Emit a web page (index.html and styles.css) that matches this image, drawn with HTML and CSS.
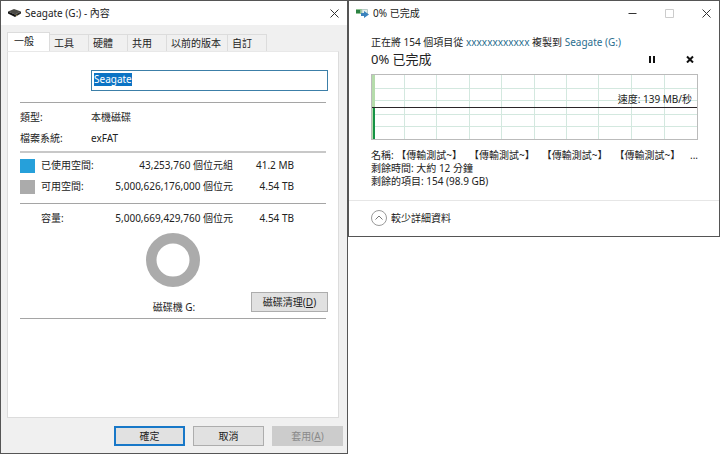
FILE: index.html
```html
<!DOCTYPE html>
<html lang="zh-TW">
<head>
<meta charset="utf-8">
<title>Seagate (G:) - 內容</title>
<link rel="stylesheet" href="styles.css">
</head>
<body>
<main class="desktop">
  <section class="window props">
    <header class="titlebar">
      <svg class="drive-icon" viewBox="0 0 13 10" aria-hidden="true"><path d="M0 3.500 6 1l7 2.500-6 3z" fill="#4b4a45"/><path d="M0 3.500l7 3V9L0 5.500z" fill="#111"/><path d="M7 6.500l6-3v2L7 9z" fill="#2a2926"/><path d="M8 7.500l1-.5" stroke="#b3a24c"/></svg>
      <h1 class="title">Seagate (G:) - 內容</h1>
      <button class="caption" aria-label="關閉"><svg viewBox="0 0 9 9"><path d="M.5.5l8 8m0-8l-8 8"/></svg></button>
    </header>
    <div class="props-body">
      <nav class="tabs" role="tablist">
        <button class="tab selected" role="tab" aria-selected="true">一般</button>
        <button class="tab" role="tab">工具</button>
        <button class="tab" role="tab">硬體</button>
        <button class="tab" role="tab">共用</button>
        <button class="tab wide" role="tab">以前的版本</button>
        <button class="tab" role="tab">自訂</button>
      </nav>
      <div class="panel" role="tabpanel">
        <div class="name-field"><label class="name-box"><span class="highlight" aria-hidden="true">Seagate</span><input class="name-input" type="text" value="Seagate" aria-label="磁碟名稱"></label></div>
        <hr class="rule">
        <dl class="facts">
          <dt>類型:</dt><dd>本機磁碟</dd>
          <dt>檔案系統:</dt><dd>exFAT</dd>
        </dl>
        <hr class="rule thick">
        <table class="usage">
          <tr><td class="key"><span class="swatch used"></span></td><th scope="row">已使用空間:</th><td class="bytes">43,253,760 個位元組</td><td class="size">41.2 MB</td></tr>
          <tr><td class="key"><span class="swatch free"></span></td><th scope="row">可用空間:</th><td class="bytes">5,000,626,176,000 個位元</td><td class="size">4.54 TB</td></tr>
        </table>
        <hr class="rule spaced">
        <table class="usage">
          <tr><td class="key"></td><th scope="row">容量:</th><td class="bytes">5,000,669,429,760 個位元</td><td class="size">4.54 TB</td></tr>
        </table>
        <svg class="donut" viewBox="0 0 54 54" aria-hidden="true"><circle cx="27" cy="27" r="21.75" fill="none" stroke="#ababab" stroke-width="10.5"/></svg>
        <div class="drive-row">
          <span class="drive-label">磁碟機 G:</span>
          <button class="button cleanup">磁碟清理(<u>D</u>)</button>
        </div>
        <hr class="rule last">
      </div>
      <footer class="actions">
        <button class="button primary">確定</button>
        <button class="button">取消</button>
        <button class="button" disabled>套用(<u>A</u>)</button>
      </footer>
    </div>
  </section>

  <section class="window copy">
    <header class="titlebar">
      <svg class="copy-icon" viewBox="0 0 13 10" aria-hidden="true"><path d="M0 1h6v5H0z" fill="#8fc293"/><path d="M0 2h4v3H0z" fill="#2c8143"/><path d="M6 1.500h5.500v5H6z" fill="#e4efec" stroke="#b7cbc8"/><path d="M5 5h3V3l5 3.500L8 10V8H5z" fill="#3b83bd"/></svg>
      <h2 class="title">0% 已完成</h2>
      <button class="caption" aria-label="最小化"><svg viewBox="0 0 9 9"><path d="M.5 4.500h8"/></svg></button>
      <button class="caption" aria-label="最大化" disabled><svg viewBox="0 0 9 9"><path d="M.5.5h8v8h-8z"/></svg></button>
      <button class="caption" aria-label="關閉"><svg viewBox="0 0 9 9"><path d="M.5.5l8 8m0-8l-8 8"/></svg></button>
    </header>
    <div class="copy-body">
      <p class="route">正在將 154 個項目從 <a href="#source">xxxxxxxxxxxx</a> 複製到 <a href="#target">Seagate (G:)</a></p>
      <div class="progress-row">
        <h3 class="progress">0% 已完成</h3>
        <button class="control" aria-label="暫停"><svg viewBox="0 0 8 8"><path d="M2 1v7M6 1v7"/></svg></button>
        <button class="control" aria-label="取消"><svg viewBox="0 0 8 8"><path d="M1 1.500l6 6m0-6l-6 6"/></svg></button>
      </div>
      <div class="chart">
        <svg class="graph" viewBox="0 0 325 64" preserveAspectRatio="none" aria-hidden="true">
          <path d="M32.500 0v64M64.500 0v64M97.500 0v64M129.500 0v64M162.500 0v64M194.500 0v64M226.500 0v64M259.500 0v64M292.500 0v64M0 13.500h325M0 25.500h325M0 39.500h325M0 51.500h325" fill="none" stroke="#d3e8df"/>
          <path d="M0 0h3v64H0z" fill="#b5dcab"/>
          <path d="M1 33h2v31H1z" fill="#159245"/>
          <path d="M0 32.500h325" stroke="#2b2428"/>
        </svg>
        <span class="speed">速度: 139 MB/秒</span>
      </div>
      <div class="details">
        <p class="names"><span>名稱: 【傳輸測試~】</span><span>【傳輸測試~】</span><span>【傳輸測試~】</span><span>【傳輸測試~】</span><span class="more">...</span></p>
        <p>剩餘時間: 大約 12 分鐘</p>
        <p>剩餘的項目: 154 (98.9 GB)</p>
      </div>
    </div>
    <footer class="copy-footer">
      <button class="toggle"><svg viewBox="0 0 16 16"><circle cx="8" cy="8" r="7.500" stroke="#9a9a9a"/><path d="M4.500 9.500L8 6l3.500 3.500" stroke="#777"/></svg>較少詳細資料</button>
    </footer>
  </section>
</main>
</body>
</html>
```
FILE: styles.css
```css
* { box-sizing: border-box; }

body, h1, h2, h3, p, dl, dd { margin: 0; }

body {
  background: #fff;
  color: #222;
  font: 10px/14px "Noto Sans", "Noto Sans CJK TC", sans-serif;
}

h1, h2, h3, th { font-size: inherit; font-weight: 400; }

button, input { font: inherit; color: inherit; }

button { padding: 0; border: 0; background: none; }

.desktop {
  display: grid;
  grid-template-columns: 29fr 31fr;
  align-items: start;
  min-height: 100vh;
}

.window {
  display: flex;
  flex-direction: column;
  border: 1px solid #555;
  background: #fff;
}

.props { min-height: 100vh; background: #f0f0f0; }

.titlebar {
  display: flex;
  align-items: center;
  height: 24px;
  padding: 0 8px 0 7px;
  background: #fff;
}

.title { flex: 1; margin-left: 4px; }

.drive-icon, .copy-icon { width: 13px; height: 10px; }

.caption { display: flex; margin-left: 28px; }

.caption svg {
  width: 9px;
  height: 9px;
  fill: none;
  stroke: #333;
}

.caption:disabled svg { stroke: #ccc; }

.props-body {
  display: flex;
  flex: 1;
  flex-direction: column;
  padding: 7px 4px 7px 6px;
}

.tabs { display: flex; align-items: flex-end; height: 19px; }

.tab {
  width: 39px;
  height: 17px;
  padding-left: 4px;
  border: 1px solid #dcdcdc;
  border-width: 1px 1px 0 0;
  text-align: left;
}

.tab.wide { width: 61px; }

.tab.selected {
  width: 43px;
  height: 19px;
  padding: 0 0 2px 6px;
  border-left-width: 1px;
  background: #fff;
}

.panel {
  flex: 1;
  margin-right: 4px;
  padding: 18px 12px 0;
  border: 1px solid #dcdcdc;
  border-top-color: #e8e8e8;
  background: #fff;
}

.name-field { display: flex; padding-left: 71px; margin-right: -2px; }

.name-box {
  position: relative;
  flex: 1;
  height: 21px;
  border: 1px solid #3c7fa8;
}

.name-input {
  display: block;
  width: 100%;
  height: 18px;
  padding: 0 2px;
  border: 0;
  outline: 0;
  background: none;
  color: transparent;
}

.highlight {
  position: absolute;
  top: 2px;
  left: 2px;
  height: 13px;
  background: #0b73c4;
  color: #fff;
  line-height: 13px;
}

.rule {
  height: 1px;
  margin: 11px 0 4px;
  border: 0;
  background: #a5a5a5;
}

.rule.thick { height: 2px; margin: 2px 0; background: #c8c8c8; }

.rule.spaced { margin: 6px 0 4px; }

.rule.last { margin: 1px 0; }

.facts {
  display: grid;
  grid-template-columns: 71px 1fr;
  line-height: 21px;
}

.usage {
  width: 100%;
  padding-right: 32px;
  border-spacing: 0;
  table-layout: fixed;
  line-height: 21px;
}

.usage td, .usage th { height: 21px; padding: 0; white-space: nowrap; }

.usage th { width: 64px; text-align: left; }

.usage .key { width: 21px; }

.usage .bytes { text-align: right; }

.usage .size { width: 61px; text-align: right; }

.swatch { display: block; width: 15px; height: 14px; }

.used { background: #26a0da; }

.free { background: #ababab; }

.donut { display: block; width: 54px; height: 54px; margin: 4px auto 5px; }

.drive-row {
  display: grid;
  grid-template-columns: 1fr auto 1fr;
  margin-right: -2px;
}

.drive-label { grid-column: 2; padding-top: 8px; line-height: 14px; height: 25px; }

.button {
  width: 71px;
  height: 20px;
  border: 1px solid #adadad;
  background: #e1e1e1;
}

.button.primary { border: 2px solid #1878c8; }

.button:disabled { border-color: #ccc; background: #ccc; color: #8a8a8a; }

.button.cleanup { width: 77px; justify-self: end; }

.actions {
  display: flex;
  justify-content: flex-end;
  gap: 8px;
  padding-top: 8px;
}

.copy-body { padding: 10px 21px 0 22px; }

.route { line-height: 15px; }

.route a { color: #2a6e8f; text-decoration: none; }

.progress-row {
  display: flex;
  align-items: center;
  gap: 30px;
  height: 18px;
  padding-right: 4px;
}

.progress { flex: 1; font-size: 13px; line-height: 18px; }

.control { display: flex; }

.control svg {
  width: 8px;
  height: 8px;
  fill: none;
  stroke: #111;
  stroke-width: 2;
}

.chart {
  position: relative;
  height: 66px;
  margin-top: 6px;
  border: 1px solid #bbb;
}

.graph { display: block; width: 100%; height: 100%; }

.speed { position: absolute; top: 17px; right: 5px; }

.details { padding-top: 9px; line-height: 13px; }

.names { display: flex; gap: 7px; white-space: nowrap; }

.more { margin-left: auto; }

.copy-footer {
  margin-top: 12px;
  padding: 9px 22px 10px;
  border-top: 1px solid #e6e6e6;
}

.toggle { display: flex; align-items: center; gap: 4px; }

.toggle svg { width: 16px; height: 16px; fill: none; }
```
